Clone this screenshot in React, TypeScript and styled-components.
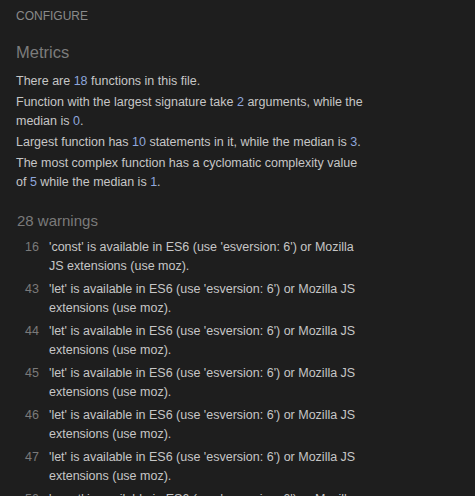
import styled, { createGlobalStyle } from "styled-components";

const GlobalStyle = createGlobalStyle`
    html, body {
        margin: 0;
        padding: 0;
        background: #1e1e1e;
    }
    body {
        font-family: "Liberation Sans", Arial, sans-serif;
        -webkit-font-smoothing: antialiased;
    }
`;

const warnings = [
    { line: 16, text: "'const' is available in ES6 (use 'esversion: 6') or Mozilla JS extensions (use moz)." },
    { line: 43, text: "'let' is available in ES6 (use 'esversion: 6') or Mozilla JS extensions (use moz)." },
    { line: 44, text: "'let' is available in ES6 (use 'esversion: 6') or Mozilla JS extensions (use moz)." },
    { line: 45, text: "'let' is available in ES6 (use 'esversion: 6') or Mozilla JS extensions (use moz)." },
    { line: 46, text: "'let' is available in ES6 (use 'esversion: 6') or Mozilla JS extensions (use moz)." },
    { line: 47, text: "'let' is available in ES6 (use 'esversion: 6') or Mozilla JS extensions (use moz)." },
    { line: 50, text: "'const' is available in ES6 (use 'esversion: 6') or Mozilla JS extensions (use moz)." },
];

const App = () => {
    return (
        <Page>
            <GlobalStyle />
            <Configure>Configure</Configure>

            <Heading>Metrics</Heading>
            <Metric>
                There are <Num>18</Num> functions in this file.
            </Metric>
            <Metric>
                Function with the largest signature take <Num>2</Num> arguments, while the
                median is <Num>0</Num>.
            </Metric>
            <Metric>
                Largest function has <Num>10</Num> statements in it, while the median is{" "}
                <Num>3</Num>.
            </Metric>
            <Metric>
                The most complex function has a cyclomatic complexity value of <Num>5</Num> while
                the median is <Num>1</Num>.
            </Metric>

            <WarningsHeading>28 warnings</WarningsHeading>
            <WarningList>
                {warnings.map((w, i) => (
                    <Warning key={i}>
                        <LineNo>{w.line}</LineNo>
                        <WarningText>{w.text}</WarningText>
                    </Warning>
                ))}
            </WarningList>
        </Page>
    );
};

export default App;

const Page = styled.div`
    width: 354px;
    height: 487px;
    overflow: hidden;
    padding: 9px 105px 0 16px;
    color: #c6c6c6;
`;

const Configure = styled.div`
    font-size: 12px;
    line-height: 14px;
    text-transform: uppercase;
    color: #8a8a8a;
`;

const Heading = styled.h2`
    font-size: 16.5px;
    font-weight: normal;
    line-height: 20px;
    color: #7c7c7c;
    margin: 19px 0 10px 0;
`;

const Metric = styled.p`
    font-size: 12.5px;
    line-height: 19px;
    margin: 0 0 2px 0;
`;

const Num = styled.span`
    color: #8ea6dc;
`;

const WarningsHeading = styled.h3`
    font-size: 15px;
    font-weight: normal;
    line-height: 18px;
    color: #7a7a7a;
    margin: 20px 0 8px 1px;
`;

const WarningList = styled.ul`
    list-style: none;
    margin: 0;
    padding: 0;
`;

const Warning = styled.li`
    display: flex;
    gap: 10px;
    margin-bottom: 4px;
    font-size: 12.5px;
    line-height: 19px;
`;

const LineNo = styled.span`
    flex: 0 0 23px;
    text-align: right;
    color: #7a7a7a;
`;

const WarningText = styled.span`
    flex: 1;
    color: #c6c6c6;
`;
